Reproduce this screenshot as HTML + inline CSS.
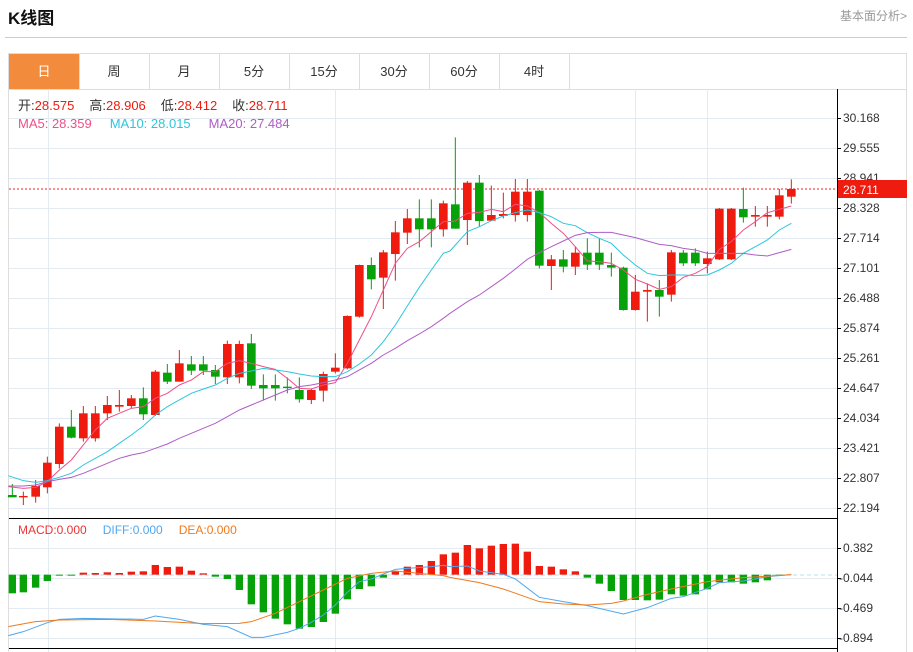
<!DOCTYPE html>
<html><head><meta charset="utf-8"><style>
body{margin:0;background:#fff;width:913px;height:652px;overflow:hidden;font-family:"Liberation Sans","Noto Sans CJK SC",sans-serif;}
svg{position:absolute;left:0;top:0}
</style></head><body>
<svg width="913" height="652" xmlns="http://www.w3.org/2000/svg" font-family="Liberation Sans, Noto Sans CJK SC, sans-serif">
<text x="8" y="24" font-size="17" font-weight="bold" fill="#111">K线图</text>
<text x="907" y="20" font-size="12" fill="#999" text-anchor="end">基本面分析&gt;</text>
<line x1="5" y1="37.5" x2="907" y2="37.5" stroke="#ccc"/>
<rect x="8.5" y="53.5" width="898" height="36" fill="#fff" stroke="#ddd"/>
<rect x="9" y="54" width="70" height="35" fill="#f28c3c"/>
<g stroke="#ddd"><line x1="79.5" y1="54" x2="79.5" y2="89"/><line x1="149.5" y1="54" x2="149.5" y2="89"/><line x1="219.5" y1="54" x2="219.5" y2="89"/><line x1="289.5" y1="54" x2="289.5" y2="89"/><line x1="359.5" y1="54" x2="359.5" y2="89"/><line x1="429.5" y1="54" x2="429.5" y2="89"/><line x1="499.5" y1="54" x2="499.5" y2="89"/><line x1="569.5" y1="54" x2="569.5" y2="89"/></g>
<g font-size="13" text-anchor="middle" fill="#333"><text x="44" y="76" fill="#fff">日</text><text x="114" y="76">周</text><text x="184" y="76">月</text><text x="254" y="76">5分</text><text x="324" y="76">15分</text><text x="394" y="76">30分</text><text x="464" y="76">60分</text><text x="534" y="76">4时</text></g>
<line x1="8.5" y1="89" x2="8.5" y2="652" stroke="#ddd"/>
<line x1="906.5" y1="89" x2="906.5" y2="652" stroke="#ddd"/>
<g stroke="#e3eaf2">
<line x1="9" y1="118.5" x2="837" y2="118.5"/><line x1="9" y1="148.5" x2="837" y2="148.5"/><line x1="9" y1="178.5" x2="837" y2="178.5"/><line x1="9" y1="208.5" x2="837" y2="208.5"/><line x1="9" y1="238.5" x2="837" y2="238.5"/><line x1="9" y1="268.5" x2="837" y2="268.5"/><line x1="9" y1="298.5" x2="837" y2="298.5"/><line x1="9" y1="328.5" x2="837" y2="328.5"/><line x1="9" y1="358.5" x2="837" y2="358.5"/><line x1="9" y1="388.5" x2="837" y2="388.5"/><line x1="9" y1="418.5" x2="837" y2="418.5"/><line x1="9" y1="448.5" x2="837" y2="448.5"/><line x1="9" y1="478.5" x2="837" y2="478.5"/><line x1="9" y1="508.5" x2="837" y2="508.5"/>
<line x1="9" y1="548.5" x2="837" y2="548.5"/><line x1="9" y1="578.5" x2="837" y2="578.5"/><line x1="9" y1="608.5" x2="837" y2="608.5"/><line x1="9" y1="638.5" x2="837" y2="638.5"/>
<line x1="48.5" y1="89" x2="48.5" y2="652"/><line x1="335.5" y1="89" x2="335.5" y2="652"/><line x1="635.5" y1="89" x2="635.5" y2="652"/><line x1="707.5" y1="89" x2="707.5" y2="652"/>
</g>
<line x1="9" y1="518.5" x2="837" y2="518.5" stroke="#000"/>
<line x1="9" y1="648.5" x2="837" y2="648.5" stroke="#000"/>
<line x1="837.5" y1="89" x2="837.5" y2="652" stroke="#000"/>
<g stroke="#000"><line x1="837" y1="118.5" x2="841" y2="118.5"/><line x1="837" y1="148.5" x2="841" y2="148.5"/><line x1="837" y1="178.5" x2="841" y2="178.5"/><line x1="837" y1="208.5" x2="841" y2="208.5"/><line x1="837" y1="238.5" x2="841" y2="238.5"/><line x1="837" y1="268.5" x2="841" y2="268.5"/><line x1="837" y1="298.5" x2="841" y2="298.5"/><line x1="837" y1="328.5" x2="841" y2="328.5"/><line x1="837" y1="358.5" x2="841" y2="358.5"/><line x1="837" y1="388.5" x2="841" y2="388.5"/><line x1="837" y1="418.5" x2="841" y2="418.5"/><line x1="837" y1="448.5" x2="841" y2="448.5"/><line x1="837" y1="478.5" x2="841" y2="478.5"/><line x1="837" y1="508.5" x2="841" y2="508.5"/><line x1="837" y1="548.5" x2="841" y2="548.5"/><line x1="837" y1="578.5" x2="841" y2="578.5"/><line x1="837" y1="608.5" x2="841" y2="608.5"/><line x1="837" y1="638.5" x2="841" y2="638.5"/></g>
<g font-size="12" fill="#333"><text x="843" y="122">30.168</text><text x="843" y="152">29.555</text><text x="843" y="182">28.941</text><text x="843" y="212">28.328</text><text x="843" y="242">27.714</text><text x="843" y="272">27.101</text><text x="843" y="302">26.488</text><text x="843" y="332">25.874</text><text x="843" y="362">25.261</text><text x="843" y="392">24.647</text><text x="843" y="422">24.034</text><text x="843" y="452">23.421</text><text x="843" y="482">22.807</text><text x="843" y="512">22.194</text>
<text x="843" y="552">0.382</text><text x="839" y="582">-0.044</text><text x="839" y="612">-0.469</text><text x="839" y="642">-0.894</text></g>
<line x1="9" y1="189" x2="837" y2="189" stroke="#e22" stroke-dasharray="2,2"/>
<rect x="838" y="180" width="69" height="18" fill="#ee1b0e"/>
<text x="843" y="194" font-size="12" fill="#fff">28.711</text>
<g font-size="13"><text x="18" y="110" fill="#333">开:<tspan fill="#ee1b0e">28.575</tspan><tspan dx="15" fill="#333">高:</tspan><tspan fill="#ee1b0e">28.906</tspan><tspan dx="15" fill="#333">低:</tspan><tspan fill="#ee1b0e">28.412</tspan><tspan dx="15" fill="#333">收:</tspan><tspan fill="#ee1b0e">28.711</tspan></text>
<text x="18" y="128"><tspan fill="#ef4f86">MA5: 28.359</tspan><tspan dx="18" fill="#2cc6dc">MA10: 28.015</tspan><tspan dx="18" fill="#b05cc7">MA20: 27.484</tspan></text></g>
<text x="18" y="534" font-size="12"><tspan fill="#ee3333">MACD:0.000</tspan><tspan dx="16" fill="#4fa7f0">DIFF:0.000</tspan><tspan dx="16" fill="#f07a1c">DEA:0.000</tspan></text>
<line x1="9" y1="575" x2="837" y2="575" stroke="#b8dcef" stroke-dasharray="4,3"/>

<g transform="translate(0,90) scale(0.33333)">
<g stroke-width="3">
<path stroke="#07a10a" d="M37 1182V1222M214 960V1045M430 892V990M502 822V882M574 798V855M610 798V855M646 825V882M754 732V897M790 853V932M826 853V932M862 862V910M898 862V938M1114 502V598M1258 328V472M1294 328V472M1366 142V416"/>
<path stroke="#ee1b0e" d="M70 1205V1245M107 1170V1238M142 1100V1210M178 1000V1135M250 948V1055M286 948V1055M322 918V990M358 900V965M394 915V955M466 840V978M538 780V875M682 752V882M718 752V880M934 895V942M970 845V935M1006 790V850M1042 676V838M1078 524V683M1150 480V657M1186 393V572M1222 357V462M1330 332V440"/>
</g>
<g fill="#07a10a"><rect x="24" y="1215" width="26" height="7"/><rect x="201" y="1010" width="26" height="33"/><rect x="417" y="925" width="26" height="48"/><rect x="489" y="848" width="26" height="27"/><rect x="561" y="823" width="26" height="19"/><rect x="597" y="823" width="26" height="19"/><rect x="633" y="840" width="26" height="20"/><rect x="741" y="760" width="26" height="127"/><rect x="777" y="885" width="26" height="10"/><rect x="813" y="885" width="26" height="10"/><rect x="849" y="890" width="26" height="4"/><rect x="885" y="900" width="26" height="28"/><rect x="1101" y="525" width="26" height="43"/><rect x="1245" y="385" width="26" height="33"/><rect x="1281" y="385" width="26" height="33"/><rect x="1353" y="343" width="26" height="73"/></g>
<g fill="#ee1b0e"><rect x="57" y="1218" width="26" height="4"/><rect x="94" y="1188" width="26" height="32"/><rect x="129" y="1118" width="26" height="74"/><rect x="165" y="1010" width="26" height="112"/><rect x="237" y="970" width="26" height="75"/><rect x="273" y="970" width="26" height="75"/><rect x="309" y="945" width="26" height="25"/><rect x="345" y="945" width="26" height="5"/><rect x="381" y="925" width="26" height="23"/><rect x="453" y="845" width="26" height="130"/><rect x="525" y="820" width="26" height="55"/><rect x="669" y="762" width="26" height="100"/><rect x="705" y="762" width="26" height="100"/><rect x="921" y="900" width="26" height="30"/><rect x="957" y="852" width="26" height="50"/><rect x="993" y="833" width="26" height="12"/><rect x="1029" y="678" width="26" height="157"/><rect x="1065" y="525" width="26" height="155"/><rect x="1137" y="487" width="26" height="76"/><rect x="1173" y="427" width="26" height="65"/><rect x="1209" y="385" width="26" height="43"/><rect x="1317" y="340" width="26" height="78"/></g>
<g fill="none" stroke-width="3">
<polyline stroke="#ef4f86" points="25,1190 70,1195 107,1192 142,1175 178,1140 214,1110 250,1065 286,1020 322,985 358,970 394,955 430,950 466,925 502,910 538,885 574,870 610,845 646,845 682,820 718,812 754,820 790,830 826,838 862,865 898,895 934,897 970,885 1006,878 1042,820 1078,750 1114,680 1150,600 1186,520 1222,475 1258,455 1294,425 1330,395 1350,395"/>
<polyline stroke="#2cc6dc" points="25,1157 70,1172 107,1177 142,1172 178,1162 214,1150 250,1125 286,1105 322,1085 358,1060 394,1035 430,1008 466,975 502,950 538,930 574,910 610,897 646,885 682,865 718,850 754,843 790,835 826,840 862,845 898,852 934,858 970,860 1006,860 1042,845 1078,822 1114,795 1150,755 1186,705 1222,648 1258,592 1294,540 1330,490 1350,483"/>
<polyline stroke="#b05cc7" points="25,1188 70,1188 107,1185 142,1175 178,1168 214,1162 250,1150 286,1135 322,1120 358,1105 394,1095 430,1088 466,1075 502,1062 538,1045 574,1030 610,1015 646,1000 682,980 718,960 754,945 790,930 826,915 862,900 898,890 934,885 970,878 1006,870 1042,860 1078,840 1114,820 1150,795 1186,775 1222,752 1258,732 1294,710 1330,685 1350,670"/>
</g>
</g>
<g transform="translate(450,90) scale(0.33333)">
<g stroke-width="3">
<path stroke="#07a10a" d="M88 255V410M268 300V535M340 480V547M412 445V540M448 445V540M484 488V560M520 530V662M628 570V680M700 480V528M736 475V528M880 293V398"/>
<path stroke="#ee1b0e" d="M52 273V465M124 287V393M160 308V385M196 267V395M232 267V395M304 495V600M376 470V555M556 555V662M592 580V695M664 480V635M772 485V550M808 354V510M844 354V510M916 348V410M952 348V410M988 297V388M1024 268V341"/>
</g>
<g fill="#07a10a"><rect x="75" y="278" width="26" height="115"/><rect x="255" y="302" width="26" height="225"/><rect x="327" y="508" width="26" height="22"/><rect x="399" y="488" width="26" height="36"/><rect x="435" y="488" width="26" height="36"/><rect x="471" y="525" width="26" height="8"/><rect x="507" y="533" width="26" height="127"/><rect x="615" y="600" width="26" height="20"/><rect x="687" y="488" width="26" height="32"/><rect x="723" y="488" width="26" height="32"/><rect x="867" y="357" width="26" height="25"/></g>
<g fill="#ee1b0e"><rect x="39" y="278" width="26" height="112"/><rect x="111" y="375" width="26" height="17"/><rect x="147" y="372" width="26" height="6"/><rect x="183" y="305" width="26" height="70"/><rect x="219" y="305" width="26" height="70"/><rect x="291" y="508" width="26" height="20"/><rect x="363" y="488" width="26" height="42"/><rect x="543" y="605" width="26" height="55"/><rect x="579" y="600" width="26" height="5"/><rect x="651" y="487" width="26" height="127"/><rect x="759" y="505" width="26" height="17"/><rect x="795" y="356" width="26" height="152"/><rect x="831" y="356" width="26" height="152"/><rect x="903" y="375" width="26" height="5"/><rect x="939" y="375" width="26" height="5"/><rect x="975" y="316" width="26" height="64"/><rect x="1011" y="297" width="26" height="23"/></g>
<g fill="none" stroke-width="3">
<polyline stroke="#ef4f86" points="0,395 16,393 52,370 88,367 124,358 160,365 196,343 232,348 268,368 304,400 340,430 376,470 412,513 448,515 484,520 520,540 556,568 592,582 628,598 664,590 700,562 736,550 772,530 808,478 844,455 880,420 916,395 952,368 988,358 1024,348"/>
<polyline stroke="#2cc6dc" points="0,483 52,425 88,410 124,392 160,378 196,368 232,360 268,368 304,380 340,400 376,407 412,428 448,445 484,460 520,495 556,525 592,550 628,557 664,555 700,555 736,557 772,555 808,540 844,520 880,490 916,470 952,450 988,420 1024,400"/>
<polyline stroke="#b05cc7" points="0,670 52,635 88,615 124,590 160,565 196,537 232,508 268,488 304,470 340,453 376,436 412,428 448,427 484,427 520,435 556,443 592,453 628,463 664,467 700,475 736,480 772,490 808,490 844,490 880,490 916,495 952,498 988,488 1024,478"/>
</g>
</g>
<g transform="translate(0,505) scale(0.33333)">
<g fill="#07a10a"><rect x="26" y="209" width="22" height="56"/><rect x="59" y="209" width="22" height="53"/><rect x="96" y="209" width="22" height="39"/><rect x="131" y="209" width="22" height="19"/><rect x="167" y="209" width="22" height="3"/><rect x="203" y="209" width="22" height="3"/><rect x="635" y="209" width="22" height="6"/><rect x="671" y="209" width="22" height="13"/><rect x="707" y="209" width="22" height="46"/><rect x="743" y="209" width="22" height="89"/><rect x="779" y="209" width="22" height="113"/><rect x="815" y="209" width="22" height="132"/><rect x="851" y="209" width="22" height="149"/><rect x="887" y="209" width="22" height="162"/><rect x="923" y="209" width="22" height="157"/><rect x="959" y="209" width="22" height="142"/><rect x="995" y="209" width="22" height="117"/><rect x="1031" y="209" width="22" height="74"/><rect x="1067" y="209" width="22" height="43"/><rect x="1103" y="209" width="22" height="35"/><rect x="1139" y="209" width="22" height="9"/></g>
<g fill="#ee1b0e"><rect x="239" y="203" width="22" height="6"/><rect x="275" y="204" width="22" height="5"/><rect x="311" y="202" width="22" height="7"/><rect x="347" y="204" width="22" height="5"/><rect x="383" y="200" width="22" height="9"/><rect x="419" y="199" width="22" height="10"/><rect x="455" y="180" width="22" height="29"/><rect x="491" y="186" width="22" height="23"/><rect x="527" y="185" width="22" height="24"/><rect x="563" y="197" width="22" height="12"/><rect x="599" y="205" width="22" height="4"/><rect x="1175" y="198" width="22" height="11"/><rect x="1211" y="185" width="22" height="24"/><rect x="1247" y="180" width="22" height="29"/><rect x="1283" y="168" width="22" height="41"/><rect x="1319" y="148" width="22" height="61"/><rect x="1355" y="143" width="22" height="66"/></g>
<g fill="none" stroke-width="3">
<polyline stroke="#4fa7f0" points="25,392 70,380 142,353 178,343 250,340 430,343 466,333 538,343 610,358 682,365 754,397 790,397 862,382 898,370 934,352 970,330 1006,300 1042,262 1078,230 1114,222 1150,207 1186,193 1222,190 1294,185 1330,181 1350,185"/>
<polyline stroke="#f07a1c" points="25,365 106,350 178,345 322,343 466,348 610,356 718,355 754,350 826,325 898,290 970,255 1042,220 1114,205 1186,198 1258,205 1330,212 1350,217"/>
</g>
</g>
<g transform="translate(450,505) scale(0.33333)">
<g fill="#ee1b0e"><rect x="41" y="120" width="22" height="89"/><rect x="77" y="130" width="22" height="79"/><rect x="113" y="122" width="22" height="87"/><rect x="149" y="117" width="22" height="92"/><rect x="185" y="116" width="22" height="93"/><rect x="221" y="140" width="22" height="69"/><rect x="257" y="183" width="22" height="26"/><rect x="293" y="185" width="22" height="24"/><rect x="329" y="193" width="22" height="16"/><rect x="365" y="199" width="22" height="10"/></g>
<g fill="#07a10a"><rect x="401" y="209" width="22" height="9"/><rect x="437" y="209" width="22" height="27"/><rect x="473" y="209" width="22" height="49"/><rect x="509" y="209" width="22" height="76"/><rect x="545" y="209" width="22" height="76"/><rect x="581" y="209" width="22" height="77"/><rect x="617" y="209" width="22" height="75"/><rect x="653" y="209" width="22" height="59"/><rect x="689" y="209" width="22" height="63"/><rect x="725" y="209" width="22" height="59"/><rect x="761" y="209" width="22" height="44"/><rect x="797" y="209" width="22" height="23"/><rect x="833" y="209" width="22" height="23"/><rect x="869" y="209" width="22" height="27"/><rect x="905" y="209" width="22" height="23"/><rect x="941" y="209" width="22" height="17"/><rect x="977" y="209" width="22" height="3"/></g>
<g fill="none" stroke-width="3">
<polyline stroke="#4fa7f0" points="0,185 52,183 88,198 160,208 196,222 268,277 340,290 412,302 520,327 592,308 664,280 700,275 772,250 808,233 880,228 952,215 1024,209"/>
<polyline stroke="#f07a1c" points="0,217 88,233 160,252 268,290 340,297 412,300 484,295 520,288 592,268 664,252 772,230 880,218 1024,209"/>
</g>
</g>
</svg>
</body></html>
